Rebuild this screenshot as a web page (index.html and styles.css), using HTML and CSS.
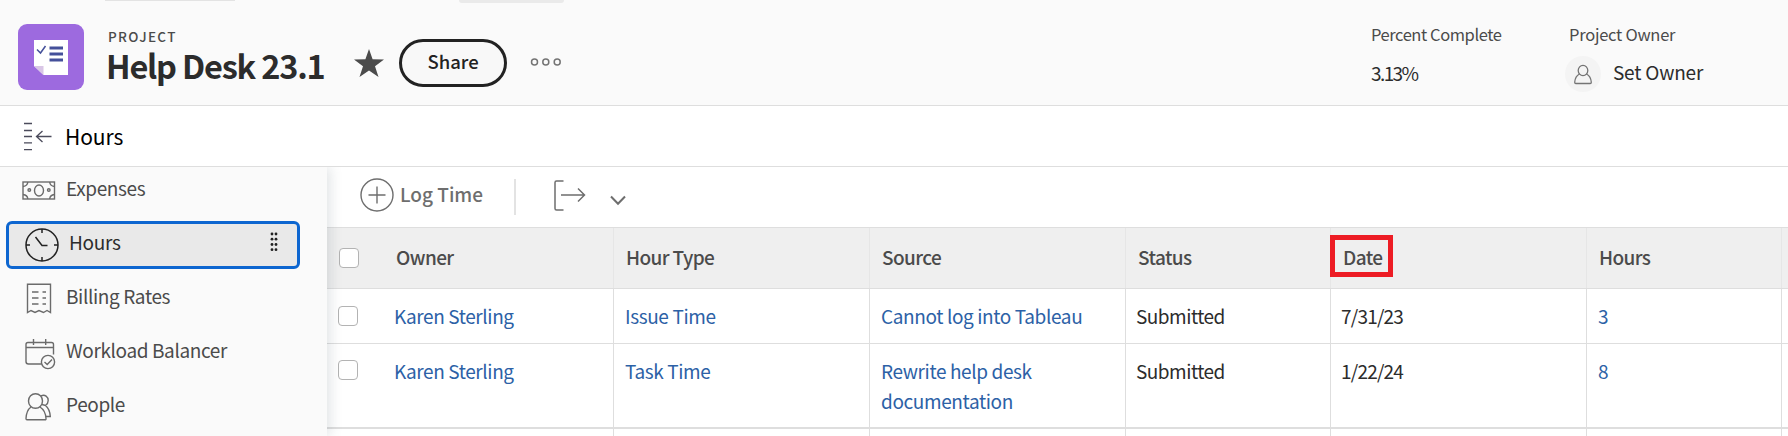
FILE: index.html
```html
<!DOCTYPE html>
<html lang="en">
<head>
<meta charset="utf-8">
<title>Help Desk 23.1 - Hours</title>
<link rel="stylesheet" href="styles.css">
</head>
<body>
<header class="header">
  <span class="tab-line"></span>
  <span class="tab-pill"></span>
  <div class="project-icon">
    <svg width="66" height="66" viewBox="0 0 66 66">
      <path d="M16 16H50V51H25.5L16 42Z" fill="#fff"/>
      <path d="M16 42H25.5V51Z" fill="#d9c6e6"/>
      <path d="M19 25.5L22.500 29L27.500 22" fill="none" stroke="#44509a" stroke-width="1.500"/>
      <path d="M31.500 24H45M31.500 30H45M31.500 36H45" stroke="#44509a" stroke-width="2.800"/>
    </svg>
  </div>
  <div class="title-block">
    <div class="kicker">PROJECT</div>
    <h1 class="title">Help Desk 23.1</h1>
  </div>
  <svg class="star" width="30" height="29" viewBox="0 0 30 29"><path d="M15 0L18.600 10.200L30 10.400L21 17.200L24.500 28L15 21.600L5.500 28L9 17.200L0 10.400L11.400 10.200Z" fill="#4b4b4b"/></svg>
  <button class="share">Share</button>
  <svg class="more" width="32" height="10" viewBox="0 0 32 10" fill="none" stroke="#747474" stroke-width="1.500"><circle cx="4.500" cy="5" r="3"/><circle cx="15.800" cy="5" r="3"/><circle cx="27.200" cy="5" r="3"/></svg>
  <div class="fact percent">
    <div class="fact-label percent-label">Percent Complete</div>
    <div class="fact-value"><span class="pct">3.13%</span></div>
  </div>
  <div class="fact owner">
    <div class="fact-label owner-label">Project Owner</div>
    <div class="fact-value">
      <span class="avatar"><svg width="36" height="36" viewBox="0 0 36 36" fill="none" stroke="#747474" stroke-width="1.300"><ellipse cx="18" cy="14.500" rx="4.800" ry="5.200"/><path d="M14.500 18C11.500 19.500 10 22.500 9.700 26.300Q9.700 27.500 10.800 27.500H25.200Q26.300 27.500 26.300 26.300C26 22.500 24.500 19.500 21.500 18"/></svg></span>
      <span class="set-owner">Set Owner</span>
    </div>
  </div>
</header>
<div class="subheader">
  <svg width="28" height="30" viewBox="0 0 28 30" fill="none" stroke="#4b4b5b" stroke-width="1.300"><path d="M0 1.500H8M0 8.500H8M0 14.500H8M0 20.800H8M0 27.700H8M12.500 14.500H27.500M18.500 9L12.500 14.500L18.500 20"/></svg>
  <h2 class="section">Hours</h2>
</div>
<div class="body">
  <nav class="sidebar">
    <a class="item">
      <svg width="34" height="34" viewBox="0 0 34 34" fill="none" stroke="#6b6b6b" stroke-width="1.400"><rect x="1" y="11" width="31.500" height="17"/><ellipse cx="17" cy="19.500" rx="4.500" ry="5.500"/><circle cx="7.300" cy="19" r="1.300"/><circle cx="26.800" cy="19" r="1.300"/><path d="M1 15.500Q5.500 15 5.800 11M1 23.500Q5.500 24 5.800 28M32.500 15.500Q28 15 27.700 11M32.500 23.500Q28 24 27.700 28"/></svg>
      <span>Expenses</span>
    </a>
    <a class="item active">
      <svg width="34" height="34" viewBox="0 0 34 34" fill="none" stroke="#222" stroke-width="1.500"><circle cx="17" cy="17" r="16"/><path d="M17 1V5M17 29V33M1 17H5M29 17H33M10.500 9L17 17.500H22.500"/></svg>
      <span>Hours</span>
      <svg class="grip" width="8" height="20" viewBox="0 0 8 20" fill="#222"><circle cx="2" cy="2" r="1.400"/><circle cx="6" cy="2" r="1.400"/><circle cx="2" cy="7.200" r="1.400"/><circle cx="6" cy="7.200" r="1.400"/><circle cx="2" cy="12.500" r="1.400"/><circle cx="6" cy="12.500" r="1.400"/><circle cx="2" cy="17.700" r="1.400"/><circle cx="6" cy="17.700" r="1.400"/></svg>
    </a>
    <a class="item">
      <svg width="34" height="38" viewBox="0 -2 34 38" fill="none" stroke="#6b6b6b" stroke-width="1.400"><path d="M5.500 31.500V3.200H28.500V31.500L25 29.500L21.500 31.500L17 29.500L13 31.500L9 29.500Z"/><path d="M10 11H16.500M20.500 11H24M10 17H16.500M20.500 17H24M10 23H16.500M20.500 23H24"/></svg>
      <span>Billing Rates</span>
    </a>
    <a class="item">
      <svg width="34" height="38" viewBox="0 -3 34 38" fill="none" stroke="#6b6b6b" stroke-width="1.400"><path d="M19.500 28H6.500Q4 28 4 25.500V8.500Q4 6.500 6 6.500H29.500Q31.500 6.500 31.500 8.500V18.500M4 11.500H31.500M11.500 3V9M23.700 3V9"/><circle cx="26" cy="26" r="6.600"/><path d="M22.500 26L25.200 28.500L30 23.500"/></svg>
      <span>Workload Balancer</span>
    </a>
    <a class="item">
      <svg width="34" height="38" viewBox="0 -4 34 38" fill="none" stroke="#6b6b6b" stroke-width="1.400"><ellipse cx="13.500" cy="10" rx="7" ry="7.300"/><path d="M9 16C5.500 18.500 4.300 22 4 27.500Q4 28.800 5 28.800H23Q24.200 28.800 24 27.500C23.700 22 22 18.500 18 16M19 5C23 3 26.200 6 26.200 9.500Q26.200 12.500 23.500 14.500L20 13.500M23.500 14.500C26.500 17 28 20.500 28.300 25.500H24"/></svg>
      <span>People</span>
    </a>
  </nav>
  <main class="content">
    <div class="toolbar">
      <svg width="34" height="34" viewBox="0 0 34 34" fill="none" stroke="#6e6e6e" stroke-width="1.400"><circle cx="17" cy="17" r="16"/><path d="M17 8.500V25.500M8.500 17H25.500"/></svg>
      <span class="log-time">Log Time</span>
      <span class="divider"></span>
      <svg class="export" width="32" height="32" viewBox="0 0 32 32" fill="none" stroke="#6e6e6e" stroke-width="1.500"><path d="M9.500 1H2.500Q1 1 1 2.500V28.500Q1 30 2.500 30H9.500M7 15H30.500M24 8.500L30.500 15L24 21.500"/></svg>
      <svg class="chevron" width="16" height="11" viewBox="0 0 16 11" fill="none" stroke="#6e6e6e" stroke-width="2"><path d="M1 1.500L8 8.800L15 1.500"/></svg>
    </div>
    <div class="grid">
      <div class="row head">
        <div class="check"><span class="box"></span></div>
        <div class="cell first"><b>Owner</b></div>
        <div class="cell"><b>Hour Type</b></div>
        <div class="cell"><b>Source</b></div>
        <div class="cell"><b>Status</b></div>
        <div class="cell"><b>Date</b><span class="highlight"></span></div>
        <div class="cell"><b>Hours</b></div>
        <div class="rest"></div>
      </div>
      <div class="row">
        <div class="check"><span class="box"></span></div>
        <div class="cell first"><a>Karen Sterling</a></div>
        <div class="cell"><a>Issue Time</a></div>
        <div class="cell"><a>Cannot log into Tableau</a></div>
        <div class="cell"><span class="status">Submitted</span></div>
        <div class="cell"><span class="date">7/31/23</span></div>
        <div class="cell"><a>3</a></div>
        <div class="rest"></div>
      </div>
      <div class="row last">
        <div class="check"><span class="box"></span></div>
        <div class="cell first"><a>Karen Sterling</a></div>
        <div class="cell"><a>Task Time</a></div>
        <div class="cell"><a>Rewrite help desk<br>documentation</a></div>
        <div class="cell"><span class="status">Submitted</span></div>
        <div class="cell"><span class="date">1/22/24</span></div>
        <div class="cell"><a>8</a></div>
        <div class="rest"></div>
      </div>
      <div class="row blank">
        <div class="check"></div>
        <div class="cell first"></div><div class="cell"></div><div class="cell"></div><div class="cell"></div><div class="cell"></div><div class="cell"></div>
        <div class="rest"></div>
      </div>
    </div>
  </main>
</div>
</body>
</html>
```
FILE: styles.css
```css
* { box-sizing: border-box; }
body {
  margin: 0;
  height: 436px;
  overflow: hidden;
  background: #fff;
  color: #2c2c2c;
  font-family: "Noto Sans CJK SC", "Noto Sans", sans-serif;
  font-size: 19px;
  line-height: 30px;
  white-space: nowrap;
}
svg { display: block; flex: none; }
h1, h2 { margin: 0; }

.header {
  position: relative;
  display: flex;
  align-items: flex-start;
  height: 106px;
  padding-left: 18px;
  background: #fafafa;
  border-bottom: 1px solid #dedede;
}
.tab-line { position: absolute; left: 105px; top: 0; width: 130px; height: 1px; background: #e3e3e3; }
.tab-pill { position: absolute; left: 459px; top: 0; width: 105px; height: 3px; background: #eaeaea; border-radius: 0 0 4px 4px; }
.project-icon { flex: none; width: 66px; height: 66px; margin-top: 24px; border-radius: 9px; background: #9d6adf; }
.title-block { flex: none; width: 248px; margin: 26px 0 0 22px; }
.kicker { margin-left: 2px; font-size: 13.5px; line-height: 20px; font-weight: 500; color: #4b4b4b; letter-spacing: 1.35px; }
.title { font-size: 32.5px; line-height: 38px; font-weight: 700; color: #2c2c2c; letter-spacing: -1.2px; }
.star { margin-top: 49px; }
.share {
  flex: none;
  width: 108px;
  height: 48px;
  margin: 39px 0 0 15px;
  padding: 0 0 4px;
  border: 3px solid #222;
  border-radius: 24px;
  background: #f8f8f8;
  color: #222;
  font: 500 18.500px "Noto Sans CJK SC", sans-serif;
}
.more { margin: 57px 0 0 23px; }
.fact { flex: none; margin-top: 22px; }
.percent { width: 198px; margin-left: 809px; }
.fact-label { height: 24px; font-size: 16.500px; line-height: 24px; color: #4b4b4b; }
.percent-label { letter-spacing: -.43px; }
.owner-label { letter-spacing: -.26px; }
.fact-value { display: flex; height: 36px; margin-top: 10px; }
.pct { line-height: 34px; letter-spacing: -1.6px; }
.avatar { width: 36px; height: 36px; margin: 0 12px 0 -4px; border-radius: 50%; background: #f4f4f4; }
.set-owner { line-height: 32px; letter-spacing: -.2px; }

.subheader {
  display: flex;
  align-items: flex-start;
  height: 61px;
  padding: 16px 0 0 24px;
  border-bottom: 1px solid #dedede;
}
.section { margin: -1px 0 0 13px; font-size: 21px; font-weight: 400; color: #000; letter-spacing: -.1px; }

.body { display: flex; height: 269px; }
.sidebar {
  position: relative;
  z-index: 1;
  flex: none;
  width: 327px;
  background: #fafafa;
  box-shadow: 3px 0 12px rgba(60, 80, 95, .16);
  clip-path: inset(0 -20px 0 0);
}
.item { display: flex; align-items: flex-start; height: 48px; margin: 0 27px 6px 6px; padding: 4px 0 0 16px; color: #4b4b4b; letter-spacing: -.38px; }
.item span { margin-left: 10px; line-height: 34px; }
.active { border: 3px solid #0d66d0; border-radius: 6px; background: #e9e9e9; color: #2c2c2c; }
.active span { width: 52px; line-height: 28px; letter-spacing: -.3px; }
.grip { margin: 4px 0 0 149px; }

.content { flex: 1; min-width: 0; }
.toolbar { display: flex; height: 60px; padding: 11px 0 0 33px; }
.log-time { width: 114px; margin-left: 6px; font-weight: 500; line-height: 32px; color: #6e6e6e; }
.divider { width: 2px; height: 36px; margin: 1px 38px 0 0; background: #e3e3e3; }
.export { margin-top: 2px; }
.chevron { margin: 17px 0 0 24px; }

.row {
  display: grid;
  grid-template-columns: 68px 219px 256px 256px 205px 256px 195px 1fr;
  border-bottom: 1px solid #dedede;
}
.cell { position: relative; padding: 12px 0 12px 11px; border-right: 1px solid #dedede; letter-spacing: -.38px; }
.cell.first { padding-left: 0; }
.cell.first a { margin-left: -1px; }
.cell a { display: block; color: #2c61a6; }
.status { margin-left: -1px; letter-spacing: -.5px; }
.date { margin-left: -1px; letter-spacing: -.8px; }
.head { height: 62px; background: #efefef; border-top: 1px solid #dedede; }
.head .cell { padding: 14px 0 0 12px; border-color: #e6e6e6; }
.head .cell.first { padding-left: 1px; }
.head b { font-weight: 500; color: #4b4b4b; letter-spacing: -.6px; }
.last { height: 85px; border-bottom-width: 2px; }
.blank { border: 0; height: 7px; }
.blank .cell { padding: 0; }
.check { padding: 17px 0 0 11px; }
.last .check { padding-top: 16px; }
.head .check { padding: 20px 0 0 12px; }
.box { display: block; width: 20px; height: 20px; border: 1px solid #b3b3b3; border-radius: 4px; background: #fff; }
.highlight { position: absolute; left: -1px; top: 7px; width: 63px; height: 42px; border: 5px solid #ed1c24; }
```
